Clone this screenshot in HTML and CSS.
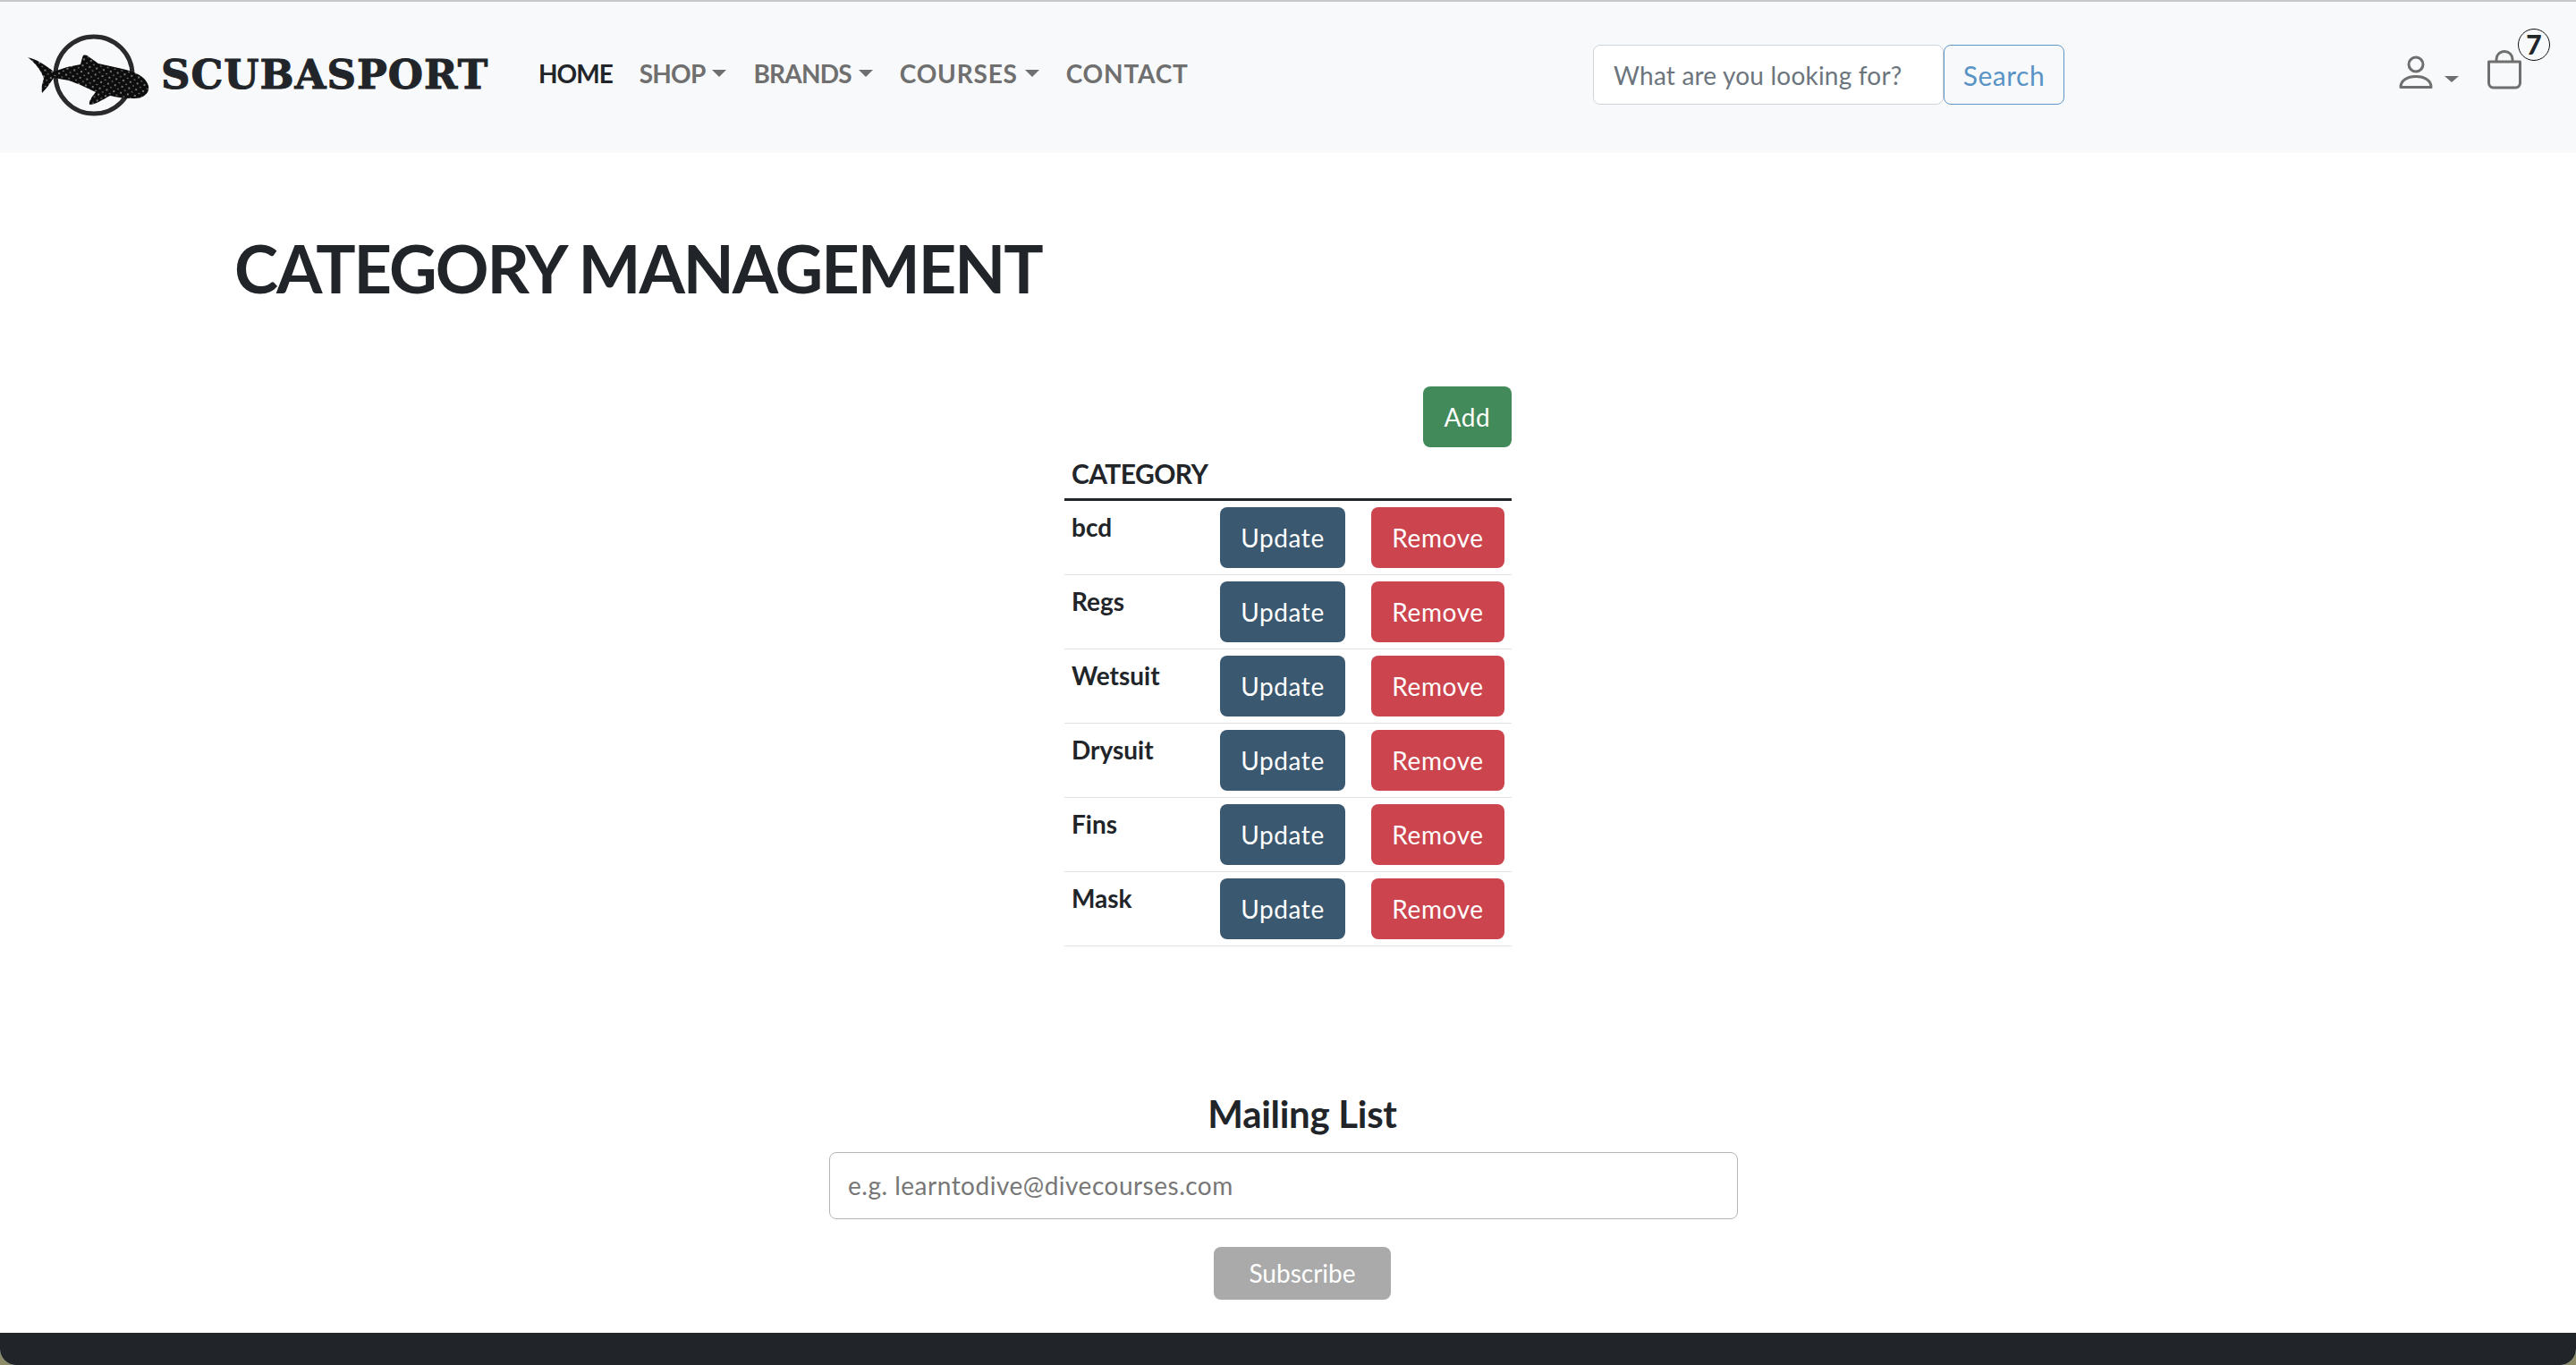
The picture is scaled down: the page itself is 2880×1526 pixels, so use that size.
FILE: index.html
```html
<!DOCTYPE html>
<html lang="en">
<head>
  <meta charset="UTF-8">
  <title>Category Management</title>
  <link rel="stylesheet" href="styles.css">
</head>
<body>
<div class="page">

  <nav class="navbar">
    <a class="brand" href="#">
      <svg class="brand-logo" viewBox="0 14 150 100" width="150" height="100">
        <defs>
          <pattern id="spots" width="8" height="7" patternUnits="userSpaceOnUse" patternTransform="rotate(12)">
            <rect width="8" height="7" fill="#0d0d0d"/>
            <circle cx="2" cy="2" r="0.9" fill="#a8a8a8"/>
            <circle cx="6" cy="5.5" r="0.8" fill="#999"/>
          </pattern>
        </defs>
        <circle cx="85" cy="64" r="43" fill="none" stroke="#2a2a2c" stroke-width="5"/>
        <path fill="url(#spots)" d="M11 44 C20 46 30 52 40 60 L55 55 L70 52 C71 48 72 44 73 42 C76 41 78 42 80 44 L90 51 L117 57 C130 60 143 65 146 76 C147 82 144 86 138 89 C130 91 115 90 103 87 C94 92 86 97 80 97 C79 92 84 87 87 83 L70 75 L57 70 L40 67 C36 73 32 79 27 84 C26 78 27 73 29 68 C27 60 19 50 11 44 Z"/>
      </svg>
      <span class="brand-name">SCUBASPORT</span>
    </a>

    <ul class="nav-links">
      <li><a class="active" href="#">HOME</a></li>
      <li><a class="dropdown" href="#">SHOP</a></li>
      <li><a class="dropdown" href="#">BRANDS</a></li>
      <li><a class="dropdown wide" href="#">COURSES</a></li>
      <li><a class="wide" href="#">CONTACT</a></li>
    </ul>

    <form class="search">
      <input type="text" placeholder="What are you looking for?">
      <button type="button">Search</button>
    </form>

    <div class="nav-icons">
      <a class="user-menu" href="#">
        <svg viewBox="0 0 38 38" width="38" height="38" fill="none" stroke="#6f6f6f" stroke-width="3">
          <circle cx="19" cy="10" r="8"/>
          <path stroke-linejoin="round" d="M2 35.5 C2 28 9 23.5 19 23.5 S36 28 36 35.5 Z"/>
        </svg>
        <span class="caret"></span>
      </a>
      <a class="cart" href="#">
        <svg viewBox="0 0 38 44" width="38" height="44" fill="none" stroke="#6f6f6f" stroke-width="3">
          <path stroke-linejoin="round" d="M1.5 13 H36.5 V37 a5 5 0 0 1 -5 5 H6.5 a5 5 0 0 1 -5 -5 Z"/>
          <path d="M10 13 V10 a9 8.5 0 0 1 18 0 V13"/>
        </svg>
        <span class="cart-count">7</span>
      </a>
    </div>
  </nav>

  <main class="content">
    <h1>CATEGORY MANAGEMENT</h1>

    <div class="category-panel">
      <div class="panel-actions">
        <a class="btn btn-add" href="#">Add</a>
      </div>
      <table class="category-table">
        <thead>
          <tr><th colspan="3">CATEGORY</th></tr>
        </thead>
        <tbody>
          <tr><td class="cat-name">bcd</td><td class="cat-btn"><a class="btn btn-update" href="#">Update</a></td><td class="cat-btn"><a class="btn btn-remove" href="#">Remove</a></td></tr>
          <tr><td class="cat-name">Regs</td><td class="cat-btn"><a class="btn btn-update" href="#">Update</a></td><td class="cat-btn"><a class="btn btn-remove" href="#">Remove</a></td></tr>
          <tr><td class="cat-name">Wetsuit</td><td class="cat-btn"><a class="btn btn-update" href="#">Update</a></td><td class="cat-btn"><a class="btn btn-remove" href="#">Remove</a></td></tr>
          <tr><td class="cat-name">Drysuit</td><td class="cat-btn"><a class="btn btn-update" href="#">Update</a></td><td class="cat-btn"><a class="btn btn-remove" href="#">Remove</a></td></tr>
          <tr><td class="cat-name">Fins</td><td class="cat-btn"><a class="btn btn-update" href="#">Update</a></td><td class="cat-btn"><a class="btn btn-remove" href="#">Remove</a></td></tr>
          <tr><td class="cat-name">Mask</td><td class="cat-btn"><a class="btn btn-update" href="#">Update</a></td><td class="cat-btn"><a class="btn btn-remove" href="#">Remove</a></td></tr>
        </tbody>
      </table>
    </div>

    <form class="mailing">
      <h2>Mailing List</h2>
      <input type="email" placeholder="e.g. learntodive@divecourses.com">
      <button type="button">Subscribe</button>
    </form>
  </main>

  <footer class="footer">
    <h3>Links</h3>
    <h3>Other</h3>
    <h3>Info</h3>
  </footer>

</div>
</body>
</html>
```

FILE: styles.css
```css
* {
  box-sizing: border-box;
}

html, body {
  margin: 0;
  height: 100%;
  background: #8d8c68;
  overflow: hidden;
}

body {
  font-family: Lato, 'Open Sans', sans-serif;
  font-size: 28px;
  color: #212529;
}

a {
  text-decoration: none;
}

.page {
  height: 1526px;
  overflow: hidden;
  background: #fff;
  border-top: 2px solid #c8c9cc;
  border-radius: 0 0 18px 18px;
}

/* navbar */
.navbar {
  display: flex;
  align-items: center;
  height: 169px;
  padding: 0 61px 6px 30px;
  background: #f8f9fa;
}

.brand {
  display: flex;
  align-items: center;
  width: 572px;
  color: #212529;
}

.brand-logo {
  flex: none;
  margin-left: -10px;
}

.brand-name {
  margin-left: 10px;
  font-family: 'DejaVu Serif', serif;
  font-size: 45px;
  font-weight: 700;
  letter-spacing: 1px;
  white-space: nowrap;
  -webkit-text-stroke: 1px #212529;
}

.nav-links {
  display: flex;
  gap: 30px;
  width: 1179px;
  margin: -3px 0 0;
  padding: 0;
  list-style: none;
  font-size: 28px;
  font-weight: 700;
  letter-spacing: -0.8px;
}

.nav-links a {
  display: flex;
  align-items: center;
  color: #6f6f6f;
}

.nav-links a.active {
  color: #212529;
  letter-spacing: -1px;
}

.nav-links a.wide {
  letter-spacing: 0.8px;
}

.dropdown::after {
  content: "";
  margin-left: 8px;
  border-top: 8px solid #6f6f6f;
  border-left: 8px solid transparent;
  border-right: 8px solid transparent;
}

.search {
  display: flex;
  height: 67px;
}

.search input {
  width: 392px;
  padding: 0 22px;
  border: 1px solid #ced4da;
  border-radius: 8px;
  background: #fff;
  font: inherit;
  letter-spacing: 0.2px;
}

.search input::placeholder {
  color: #6c757d;
  opacity: 1;
}

.search button {
  width: 135px;
  padding: 0;
  border: 1.5px solid #6097c8;
  border-radius: 8px;
  background: transparent;
  color: #5a94c6;
  font: inherit;
  font-size: 30px;
  letter-spacing: 0.5px;
}

.nav-icons {
  display: flex;
  align-items: flex-end;
  gap: 32px;
  margin-left: auto;
  height: 44px;
  margin-top: -11px;
}

.user-menu {
  display: flex;
  align-items: flex-end;
  gap: 13px;
}

.caret {
  margin-bottom: 8px;
  border-top: 7px solid #6f6f6f;
  border-left: 8px solid transparent;
  border-right: 8px solid transparent;
}

.cart {
  position: relative;
  height: 44px;
}

.cart-count {
  position: absolute;
  top: -24px;
  left: 34px;
  width: 36px;
  height: 36px;
  border: 1.5px solid #111;
  border-radius: 50%;
  color: #212529;
  font-size: 30px;
  font-weight: 900;
  line-height: 33px;
  text-align: center;
}

/* page body */
.content {
  padding-top: 81px;
}

h1 {
  margin: 0 0 84px 262px;
  font-size: 74px;
  font-weight: 700;
  letter-spacing: -2px;
  line-height: 96px;
  white-space: nowrap;
}

.category-panel {
  width: 500px;
  margin: 0 auto;
}

.panel-actions {
  display: flex;
  justify-content: flex-end;
}

.btn {
  display: inline-block;
  height: 68px;
  padding: 0 24px;
  border-radius: 8px;
  color: #fff;
  letter-spacing: 0.6px;
  line-height: 68px;
  text-align: center;
  white-space: nowrap;
}

.btn-add {
  width: 99px;
  padding: 0;
  background: #438a5a;
}

.btn-update {
  width: 140px;
  padding: 0;
  background: #3b5871;
}

.btn-remove {
  width: 149px;
  padding: 0;
  background: #cc444d;
}

.category-table {
  width: 100%;
  border-collapse: collapse;
}

.category-table th {
  height: 58px;
  padding: 0 8px 10px;
  border-bottom: 3px solid #212529;
  font-size: 30px;
  font-weight: 700;
  letter-spacing: -0.6px;
  text-align: left;
  vertical-align: bottom;
}

.category-table td {
  padding: 7px 8px;
  border-bottom: 1px solid #dee2e6;
  vertical-align: top;
}

.cat-name {
  font-weight: 700;
  line-height: 44px;
}

.cat-btn {
  width: 1px;
}

.category-table td.cat-btn:last-child {
  padding-left: 21px;
}

.category-table td.cat-btn .btn {
  display: block;
}

.mailing {
  display: flex;
  flex-direction: column;
  align-items: center;
  width: 1058px;
  margin: 162px 0 0 927px;
}

.mailing h2 {
  margin: 0 0 18px;
  font-size: 42px;
  font-weight: 700;
  letter-spacing: -0.3px;
  line-height: 50px;
}

.mailing input {
  align-self: flex-start;
  width: 1016px;
  height: 75px;
  padding: 0 20px;
  border: 1.5px solid #b5b5b5;
  border-radius: 8px;
  font: inherit;
  letter-spacing: 0.5px;
}

.mailing input::placeholder {
  color: #777;
  opacity: 1;
}

.mailing button {
  width: 198px;
  height: 59px;
  margin-top: 31px;
  border: 0;
  border-radius: 8px;
  background: #aaa;
  color: #fff;
  font: inherit;
}

/* footer, only the top of it fits in the window */
.footer {
  display: grid;
  grid-template-columns: 957px 472px 1fr;
  height: 120px;
  margin-top: 37px;
  padding: 32px 0 0 38px;
  background: #212529;
  color: #fff;
}

.footer h3 {
  margin: 0;
  font-size: 42px;
  font-weight: 700;
  line-height: 50px;
}
```
